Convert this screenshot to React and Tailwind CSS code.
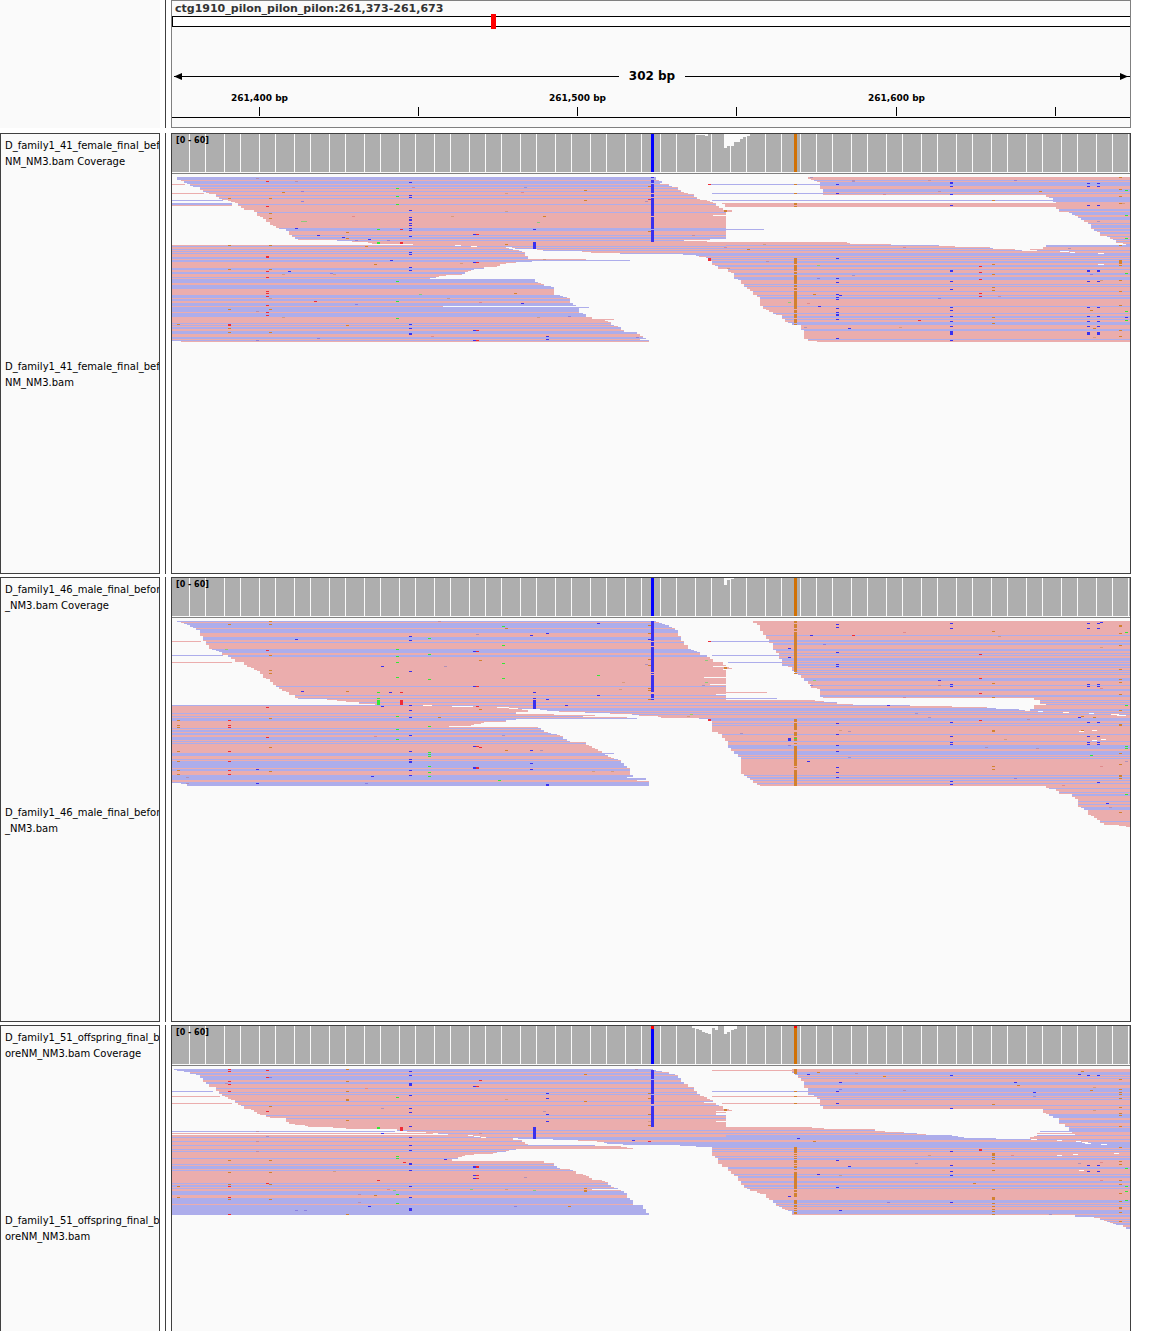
import React from "react";

const COLORS = {
  pink: "#ebadad",
  blue: "#adadeb",
  A: "#33e833",
  C: "#3a30ee",
  G: "#d2812f",
  T: "#ee2b36",
  gap: "#ffffff",
  lowC: "#8a80e0",
  lowT: "#e08a8c",
  lowG: "#d59a80",
  lowA: "#8cc878",
  lowX: "#b090b8",
};

const CHART_START = 172;
const CHART_WIDTH = 958;
const CHART_END = CHART_START + CHART_WIDTH;

// "0:177 3:181" -> [[0, 177], [3, 181]]
const parseSteps = (text) => text.split(" ").map((s) => s.split(":").map(Number));

// "0-2 5" -> [[0, 2], [5, 5]]
const parseRanges = (text) =>
  text.split(" ").map((s) => {
    const [a, b] = s.split("-").map(Number);
    return [a, b === undefined ? a : b];
  });

const valueAt = (steps, row) => {
  let value = steps[0][1];
  for (const [r, x] of steps) if (r <= row) value = x;
  return value;
};

function blockRects({ left, right, end, blue }) {
  const l = parseSteps(left);
  const r = parseSteps(right);
  const b = parseRanges(blue);
  const out = [];
  for (let row = l[0][0]; row < end; row++) {
    const x1 = valueAt(l, row);
    const x2 = valueAt(r, row);
    const color = b.some(([s, e]) => row >= s && row <= e) ? COLORS.blue : COLORS.pink;
    const last = out[out.length - 1];
    if (last && last.x1 === x1 && last.x2 === x2 && last.color === color) last.h += 1;
    else out.push({ x1, x2, y: row, h: 1, color });
  }
  return out;
}

const SNP_C = 651;
const SNP_G = 794;

const female = {
  height: 166,
  blocks: [
    {
      left: "0:177 3:181 4:184 6:187 7:190 9:193 10:200 13:203 15:206 16:209 17:216 20:219 22:222 23:228 24:231 25:235 26:238 29:241 31:244 33:254 35:257 39:260 40:263 42:266 45:270 48:273 49:276 51:279 52:286 54:289 58:292 60:295 62:298 63:337 64:352 65:368 66:372 67:413",
      right: "0:656 3:659 4:662 6:660 7:669 9:672 10:678 13:681 15:684 16:688 17:694 20:697 22:700 23:707 24:710 25:713 26:716 29:719 31:723 33:732 35:726 38:713 39:726 62:710 63:684 64:707 65:726",
      end: 68,
      blue: "0-2 4-6 8-9 11 14 18 21 27 35 51-53 58 60-61 63",
    },
    {
      left: "68:172 164:181",
      right: "68:726 70:506 71:509 72:513 73:519 74:522 75:525 79:528 82:586 83:630 84:532 85:516 86:506 87:500 89:497 90:484 92:474 93:471 94:468 95:465 97:462 98:446 99:439 100:436 101:430 102:535 105:538 106:541 107:544 109:551 110:554 118:560 119:563 120:567 121:570 126:573 128:576 129:443 130:589 131:579 136:583 137:586 140:592 142:614 143:605 144:608 145:611 148:614 149:618 150:621 153:624 155:637 157:640 159:643 161:646 162:640 163:649",
      end: 165,
      blue: "69 72 74 76 80-81 83-84 91-92 95-96 100 102-105 108-111 118-120 122-123 126-128 130-134 136-139 146 148 150-151 154-156 160-161 163",
    },
    {
      left: "65:726 70:512 71:515 72:537 73:543 74:582 75:591 76:620 77:683 78:696 79:699 80:706 81:708 84:712 88:715 89:718 92:728 95:731 96:734 102:738 103:741 107:744 110:747 112:750 114:753 118:757 120:760 129:763 132:766 133:769 135:773 137:776 138:782 142:785 145:788 146:792 148:801 153:804 162:808 164:817",
      right: "65:847 66:850 67:891 68:939 69:955 70:990 71:993 72:1015 73:1022 74:1130",
      end: 165,
      blue: "68 71 73 76-78 80 82 84-85 88-89 92 96-97 100-102 107 109 114 118 120-121 129 136 139-140 142 145-147 152-153 162",
    },
    {
      left: "0:808 2:811 3:814 4:817 5:820 12:823 18:1046 20:1049 21:1053 25:1056 26:722 27:725 30:1056 32:1059 35:1069 36:1072 38:1075 39:1078 41:1081 43:1084 45:1088 47:1091 52:1094 54:1097 55:1100 59:1107 60:1110 62:1113 63:1116 66:1123 67:1126 68:1046 70:1043 72:1030 73:1037",
      right: "0:1130",
      end: 74,
      blue: "3 5-8 12-14 16 20-24 32-33 35-37 40-42 46 48-50 52-53 55-56 59 62 64 67-69 73",
    },
  ],
  reads: [
    ["pink", 172, 185, 7, 1], ["pink", 172, 204, 16, 1], ["blue", 172, 223, 23, 1],
    ["blue", 172, 232, 26, 3], ["pink", 172, 232, 28, 1],
    ["blue", 711, 820, 7, 1], ["blue", 712, 823, 16, 1], ["blue", 712, 1053, 23, 1],
    ["blue", 726, 764, 52, 1],
    ["gap", 455, 461, 68, 1], ["gap", 471, 477, 69, 1],
    ["gap", 1060, 1069, 74, 1], ["gap", 1070, 1075, 75, 1], ["gap", 1098, 1104, 76, 1], ["gap", 1098, 1104, 87, 1],
  ],
  marks: [
    ["C", SNP_C, "0 3-5 7-15 17-19 21-38 40-51 53-64"],
    ["G", SNP_G, "7 16 26-27 29 81-86 88-93 95-96 98-106 108-109 111-112 114-131 133-135 137-140 142-144 145 147"],
    ["T", 266, "4 29 79-80 94 100 114 116 119 128 135 138"],
    ["T", 228, "147-148"], ["T", 400, "52 65-66"], ["T", 476, "57 85 153 163"], ["C", 473, "57 85 153 163"],
    ["T", 314, "124"], ["lowT", 479, "125"],
    ["C", 409, "5 18 20 33 40 42-43 46 48 51 53 59 75 77 90 93 147 151 156-157"],
    ["C", 295, "51"], ["C", 317, "58"], ["C", 342, "60"], ["C", 368, "62"], ["C", 390, "83"], ["C", 288, "94"],
    ["A", 396, "11 19 27 104 124 141"], ["A", 377, "52 65-66"], ["lowA", 301, "44"], ["lowA", 304, "44"],
    ["G", 228, "21 68 92 132 151 155"], ["G", 269, "21 36 41 68 92 132 155"], ["G", 346, "55 61 148"],
    ["G", 282, "15"], ["G", 365, "69"], ["G", 374, "87"], ["G", 177, "147"],
    ["lowX", 256, "1 134"], ["lowX", 295, "4"], ["lowC", 301, "14 24"], ["lowT", 412, "10"], ["lowT", 352, "39"],
    ["lowG", 451, "39"], ["lowC", 355, "63 127"], ["lowC", 387, "63"], ["lowG", 447, "121"], ["lowA", 419, "117"],
    ["lowG", 460, "86"], ["lowC", 330, "96"], ["lowG", 333, "97"], ["lowG", 282, "97 140"], ["lowT", 431, "159"],
    ["lowC", 317, "161"], ["lowC", 256, "163"], ["lowG", 269, "121"],
    ["G", 584, "13 23"], ["G", 648, "9 54"], ["T", 648, "22"], ["lowX", 645, "24"], ["G", 724, "33-34"],
    ["lowA", 537, "45"], ["G", 543, "39"], ["C", 533, "52 65-71"], ["C", 521, "126"], ["C", 546, "159 162"],
    ["T", 708, "7 81-83"], ["G", 747, "72"], ["lowX", 766, "84"], ["lowA", 788, "125"], ["lowT", 724, "70"],
    ["lowX", 524, "10"], ["lowT", 521, "15"], ["lowG", 505, "16 34"], ["G", 505, "67"], ["G", 514, "116"],
    ["lowG", 537, "140"], ["lowC", 568, "139"], ["lowC", 636, "160"], ["lowX", 692, "58"], ["lowG", 543, "82"], ["lowG", 727, "91"], ["lowG", 763, "67"],
    ["C", 836, "7 16 81 101 105 117 120 122 131 135 137-138 142 161"], ["C", 839, "118"], ["C", 818, "129"], ["C", 848, "151"],
    ["C", 950, "5-6 9 17 28 93-94 104 112 130 133 139 144 149 154-157 163"],
    ["C", 1087, "6 9 28 93-94 104 130 139 144 149 155-157"], ["C", 1097, "6 9 28 93-94 104 130 139 144 149 155-157"],
    ["G", 1119, "0 12 19 26 68 83-86 88 103 114 128 153 159"],
    ["A", 1125, "13 38 61 96 134 143"], ["C", 1125, "140"],
    ["G", 992, "23 87 97 110 113 140 146"], ["T", 979, "89 95 102 116 119"], ["T", 918, "143"],
    ["lowX", 810, "0"], ["lowX", 852, "3-4"], ["lowX", 928, "3"], ["lowC", 1014, "3"], ["lowX", 938, "14"], ["G", 1039, "14"],
    ["lowT", 883, "17"], ["lowX", 1097, "44"], ["lowT", 903, "70"], ["lowA", 817, "88"], ["lowX", 852, "98"], ["lowC", 817, "101"],
    ["G", 813, "117"], ["lowC", 938, "121"], ["lowT", 998, "119"], ["lowX", 1068, "71"], ["lowC", 1090, "97"],
    ["G", 1090, "133"], ["G", 1093, "151"], ["lowG", 1093, "160"], ["lowG", 899, "150"], ["lowG", 1100, "103"], ["lowG", 1122, "26"], ["lowX", 804, "150"], ["lowT", 807, "126"],
  ],
  dips: [[695, 10, 1], [705, 3, 2], [724, 3, 14], [727, 7, 12], [734, 6, 8], [740, 3, 5], [743, 4, 3], [747, 3, 2]],
  capC: 0,
  capG: 0,
};

const male = {
  height: 207,
  blocks: [
    {
      left: "0:177 1:181 2:184 3:187 4:190 6:193 7:196 9:200 15:203 20:206 24:209 28:212 29:216 30:219 31:222 34:228 36:231 38:235 41:244 44:247 46:251 47:254 49:257 50:260 53:263 57:266 58:270 61:273 64:276 66:279 68:282 70:286 71:289 74:295 77:298 78:327 79:337 80:346 81:359 83:375",
      right: "0:656 1:659 2:662 3:665 4:669 6:672 7:675 9:678 15:681 20:684 24:688 28:691 29:694 30:697 31:700 34:707 36:710 38:713 41:723 44:726 45:713 46:729 47:732 48:723 49:726 56:704 57:726 63:710 64:726 73:716 74:726",
      end: 84,
      blue: "0 2-6 8-11 16-18 21 28-31 34-35 65 74 77 81",
    },
    {
      left: "84:172 162:181 163:187",
      right: "84:726 86:497 87:509 88:522 89:528 91:516 93:554 94:595 95:583 96:627 97:637 98:516 99:506 101:484 102:481 103:474 104:471 105:449 106:538 107:541 109:544 111:548 112:551 113:557 114:560 115:563 118:567 120:570 121:586 124:589 125:592 127:595 128:598 130:602 132:614 133:605 134:608 136:611 137:614 138:618 139:621 142:624 145:627 147:630 154:633 156:627 157:646 159:637 160:649",
      end: 165,
      blue: "84 92 95 97-99 107 109-110 112-113 116-118 120 122 132-134 138 140-146 148-149 154-158 161-164",
    },
    {
      left: "79:726 84:726 86:509 87:518 88:540 89:547 90:559 91:585 92:610 93:632 94:639 95:658 96:661 97:699 98:708 100:712 111:718 113:722 117:725 120:728 127:731 130:734 133:738 136:741 153:744 155:747 157:750 159:753 162:757 164:760 165:1046 167:1049 168:1056 170:1059 173:1072 176:1075 178:1078 186:1081 187:1084 189:1088 194:1091 195:1094 197:1097 199:1100 202:1104 204:1119 205:1126",
      right: "79:815 80:824 81:837 83:853 84:910 85:952 86:987 87:996 88:1019 89:1025 90:1130",
      end: 206,
      blue: "81 84 87-89 91 93 97-99 102 104 113 120 124-127 130-133 135 137 154 156-157 159 162 167 171 173-174 180 183 186-188 200",
    },
    {
      left: "0:753 2:757 4:760 10:763 14:766 18:769 22:773 29:776 32:779 38:782 45:788 46:792 50:795 53:798 54:801 57:804 60:808 63:811 67:817 68:820 76:823 77:1034 79:1040 83:1046 84:1034 88:1030",
      right: "0:1130",
      end: 90,
      blue: "14 19-20 22-23 28-29 32 34 37-39 41 43-44 46 49 51 53 57-59 64 68-69 74-75 79 81 83 88-89",
    },
  ],
  reads: [
    ["pink", 172, 201, 20, 1], ["blue", 172, 223, 34, 1], ["pink", 172, 232, 41, 1],
    ["blue", 711, 769, 20, 1], ["blue", 712, 779, 34, 1], ["blue", 728, 782, 41, 1],
    ["pink", 726, 767, 71, 1], ["blue", 726, 777, 77, 1],
    ["gap", 423, 432, 84, 1], ["gap", 452, 473, 85, 1],
    ["gap", 1038, 1043, 90, 1], ["gap", 1063, 1069, 91, 1], ["gap", 1089, 1094, 92, 1], ["gap", 1111, 1119, 93, 1],
    ["gap", 1117, 1126, 94, 1], ["gap", 1092, 1097, 109, 1], ["gap", 1079, 1084, 110, 1], ["gap", 1101, 1106, 118, 1], ["gap", 1092, 1097, 119, 1],
  ],
  marks: [
    ["C", SNP_C, "0-19 21-24 26-50 52 54-70 73-76 78"],
    ["G", SNP_G, "0-1 3-6 8-9 11-50 52 98-100 102-108 111-114 116-119 122 125-144 146 149-164"],
    ["C", 409, "15 19 50 84 89 96 114 130 138 140-141 149 154"], ["C", 295, "18"], ["C", 381, "45"], ["C", 389, "71"],
    ["A", 428, "17 33 58 105 131 133 135 145 151 155"], ["A", 396, "28 35 41 56 95 108 118"],
    ["T", 266, "29 86 116"], ["C", 473, "30 65 125 146-147"], ["T", 476, "30 65 85 125 146-147"],
    ["G", 479, "39 88"], ["lowX", 476, "13"], ["lowX", 438, "0"], ["lowX", 444, "45"],
    ["G", 269, "0 3 34 49 52 97 126 150"], ["G", 228, "3"], ["T", 228, "99 104 106 130 140 149 153"],
    ["G", 177, "99 104 106 130 140 149 153"], ["lowX", 186, "156 162"], ["C", 256, "148 162"],
    ["C", 301, "70"], ["G", 346, "70"], ["A", 377, "71 77 79-83"], ["T", 400, "71 79-83"], ["C", 381, "85"],
    ["C", 371, "155"], ["lowC", 365, "162"], ["lowT", 374, "115"], ["G", 438, "96"], ["T", 479, "126"], ["lowA", 225, "28"],
    ["A", 502, "5 24 42 57"], ["G", 505, "7 129"], ["C", 533, "71 77 79-87"], ["C", 530, "14 129 142 148"],
    ["C", 546, "12 78 163-164"], ["C", 597, "2 74"], ["A", 597, "54"], ["C", 565, "84"], ["G", 648, "4 12 38 44 67 69 78"], ["C", 648, "18"],
    ["lowX", 645, "43"], ["G", 724, "46-47"], ["T", 708, "20 98-99"], ["lowG", 622, "61"], ["lowG", 619, "68"],
    ["lowA", 705, "39 61"], ["lowX", 702, "64"], ["lowG", 592, "150"], ["lowG", 611, "150"], ["lowX", 540, "129"], ["lowX", 502, "114"], ["A", 498, "159"],
    ["C", 788, "27 36 117-119"], ["A", SNP_G, "117"], ["lowC", 788, "124"], ["lowX", 740, "112"], ["lowA", 690, "93"], ["lowG", 687, "95"],
    ["C", 836, "3 6 31 43 45 102 113 124 130 146 151 156"], ["C", 950, "2 7 63 65 101 115 121 123 160 163"],
    ["C", 1087, "2 7 63 65 101 115 121 123"], ["C", 1097, "2 7 63 65 101 115 121 123 161"], ["C", 1100, "1"],
    ["G", 1119, "4-5 12 24 48 58 61 73 89 103-104 132 143 154-155 157 191"],
    ["A", 1125, "11 84 125 127 173"], ["lowX", 1125, "140"], ["A", 1090, "134"],
    ["G", 992, "10 62 76 109-110 145 148"], ["T", 979, "33 57 72 99"], ["lowG", 998, "15"], ["lowT", 903, "11 76"],
    ["C", 810, "14"], ["T", 852, "14"], ["lowC", 823, "23"], ["lowA", 813, "59"], ["C", 938, "59"], ["lowX", 938, "64"], ["C", 887, "84"],
    ["lowX", 928, "96"], ["lowX", 915, "92"], ["lowX", 1027, "98"], ["C", 1078, "96"], ["G", 1081, "95 109"], ["G", 1093, "96"],
    ["lowT", 1100, "67 145"], ["lowG", 1100, "26"], ["lowX", 848, "110 136"], ["lowG", 839, "109"], ["C", 807, "140"], ["lowC", 810, "64"],
    ["lowX", 985, "126"], ["lowX", 1036, "127"], ["lowG", 1004, "118"], ["lowC", 1014, "157"], ["C", 1106, "182"], ["lowX", 1109, "186"], ["lowT", 1062, "164"],
  ],
  dips: [[724, 3, 7], [727, 3, 2], [731, 3, 1]],
  capC: 0,
  capG: 0,
};

const offspring = {
  height: 161,
  blocks: [
    {
      left: "0:174 1:177 2:184 3:190 5:196 6:200 9:203 13:206 15:209 18:216 22:219 25:222 27:225 28:228 30:231 31:235 34:238 36:241 37:244 40:251 41:254 43:257 45:260 46:266 48:270 49:286 53:289 55:295 56:305 57:308 58:333 59:346 60:397 62:407 63:426 64:438 65:448",
      right: "0:653 1:656 2:662 3:669 5:675 6:678 9:681 13:684 15:688 18:694 22:697 25:700 27:704 28:707 30:710 31:713 33:704 34:716 36:719 37:723 40:729 41:732 42:716 43:726 44:716 46:726 52:716 53:726",
      end: 66,
      blue: "0-2 4-5 7-10 13-14 19 23 25 32 36 46 49 61 64",
    },
    {
      left: "66:172",
      right: "66:726 69:513 71:522 73:525 75:528 76:595 77:621 78:627 79:633 80:516 81:509 82:506 83:497 84:493 85:474 86:465 87:462 88:458 90:452 92:544 94:554 97:557 99:560 100:570 101:573 102:576 105:583 106:586 107:589 109:592 111:602 112:605 113:608 116:611 118:614 119:618 120:592 121:621 122:624 124:627 129:630 131:633 136:643 140:646 144:649",
      end: 146,
      blue: "68 72 76 80 82 89 95 97-99 101 114 116-117 119 122-125 129-134 136-145",
    },
    {
      left: "58:726 69:518 70:553 71:578 72:597 73:604 74:607 75:623 76:680 77:696 78:712 87:715 89:718 95:722 98:728 102:731 105:734 107:738 112:741 116:744 119:747 120:750 122:757 124:760 125:766 129:769 131:773 134:776 137:779 138:782 140:785 141:788 142:792 146:1075 148:1094 149:1100 151:1104 152:1107 153:1110 154:1113 155:1116 156:1123 158:1126",
      right: "58:812 59:824 60:875 62:885 63:904 64:917 65:926 66:952 67:958 68:964 69:996 70:1130",
      end: 160,
      blue: "61 64 66-70 73-78 80 82 87 89-90 98-99 105 107-108 112-113 116-117 119 131-133 135 137 141-144 146-147 150 152 154-155 158-159",
    },
    {
      left: "0:792 4:795 6:798 9:801 12:804 19:808 26:814 28:817 30:820 37:823 40:1043 44:1046 45:1049 47:1053 49:1059 55:1065 58:1069 62:1040 63:1072 64:1037 65:1075 66:1037 67:1034 68:1030",
      right: "0:1130",
      end: 70,
      blue: "3-5 7 9 13-15 19-22 24-26 28 30 36 40 45-48 51-53 57 59-62 66",
    },
  ],
  reads: [
    ["blue", 172, 213, 22, 1], ["pink", 172, 220, 27, 1], ["pink", 172, 232, 34, 1],
    ["blue", 172, 395, 62, 1], ["pink", 172, 433, 64, 1],
    ["pink", 712, 792, 1, 1], ["blue", 712, 808, 22, 1], ["pink", 712, 814, 27, 1], ["pink", 722, 820, 34, 1],
    ["gap", 468, 473, 66, 1], ["gap", 474, 480, 67, 1], ["gap", 481, 486, 68, 1],
    ["gap", 1031, 1037, 70, 1], ["gap", 1057, 1062, 71, 1], ["gap", 1076, 1081, 72, 1], ["gap", 1082, 1088, 73, 1],
    ["gap", 1085, 1091, 74, 1], ["gap", 1101, 1107, 75, 1], ["gap", 1073, 1078, 85, 1], ["gap", 1057, 1062, 86, 1], ["gap", 1114, 1119, 84, 1], ["gap", 1079, 1084, 101, 1],
  ],
  marks: [
    ["C", SNP_C, "1-9 11-24 26-34 37-57"],
    ["G", SNP_G, "0-4 22 27 34 78-83 85 87 89 91-93 95 97-98 100 103-109 110-116 117-119 121-122 124-127 131-133 134 136-137 139 141 143-144"],
    ["T", 228, "0 2 12 15 22 117 128 145"], ["G", 228, "91 103 115 130"], ["T", 266, "1 8 42 114"], ["lowC", 269, "8"],
    ["G", 269, "37 91 103 115 130"], ["G", 346, "0 12 22 30-31 51 145"],
    ["C", 409, "2 6 14-16 26 39 43 57 68 76 81 94-95 101 117 128 139-141"],
    ["C", 473, "17 97-98 106 109"], ["T", 476, "17 97-98 106 109"], ["T", 479, "11"], ["A", 396, "28 87 89 125 134"],
    ["A", 377, "58-59"], ["T", 400, "58-61"], ["lowX", 256, "62 72 82"], ["C", 381, "64"], ["lowX", 479, "64"], ["lowX", 381, "39"],
    ["lowT", 365, "19"], ["lowX", 266, "67"], ["C", 444, "90"], ["T", 403, "93"], ["G", 177, "117 128"], ["G", 374, "126"],
    ["T", 377, "111"], ["lowG", 333, "102"], ["lowA", 393, "121"], ["lowA", 470, "120"], ["lowT", 387, "120"], ["lowX", 358, "125 133"],
    ["C", 368, "137"], ["lowC", 295, "141"], ["lowC", 304, "141"], ["lowX", 225, "14"],
    ["C", 546, "24 29 45 52"], ["G", 584, "5 32 119 121-122"], ["C", 533, "58-69"], ["G", 648, "24 29 45 56"], ["lowG", 648, "52"],
    ["G", 724, "40-41"], ["lowG", 505, "30 120"], ["lowX", 543, "42"], ["lowX", 524, "108"], ["lowA", 533, "121"], ["G", 568, "137"], ["lowC", 514, "137"], ["lowX", 635, "0"],
    ["C", 632, "71"], ["T", 648, "72"], ["C", 797, "69"], ["C", 788, "127"],
    ["C", 836, "22 34 91 118"], ["C", 839, "13 141"], ["lowC", 839, "20"], ["C", 950, "6 39 82 96 102 106 133"],
    ["C", 1087, "6 96 102"], ["C", 1097, "6 96 102"], ["G", 992, "35 84-86 88 90 94 101 120 128-130 134 137 140 142 145"],
    ["T", 979, "80-81"], ["G", 1119, "10 20 23 25 29 38 44 46 57 78 92 95 111 115 124 132 138-139 143 152"],
    ["A", 1125, "99 117 122 131"], ["C", 1033, "23"], ["lowX", 1033, "27"], ["C", 1014, "13"], ["G", 1017, "16"], ["G", 1081, "2"], ["C", 1078, "5"],
    ["lowG", 1093, "18 41"], ["G", 1090, "21"], ["G", 883, "7"], ["G", 817, "3"], ["C", 807, "5"], ["lowX", 855, "4"], ["lowX", 903, "21"],
    ["G", 813, "72"], ["lowG", 928, "86"], ["lowT", 1011, "86"], ["lowX", 915, "94"], ["C", 848, "97"], ["C", 817, "105"], ["lowG", 839, "106"],
    ["G", 973, "114"], ["lowC", 887, "133"], ["lowT", 1100, "93 111"], ["lowX", 1078, "94"], ["lowX", 1049, "145"],
  ],
  dips: [[692, 4, 2], [696, 3, 3], [699, 3, 4], [702, 3, 6], [705, 3, 7], [708, 3, 8], [712, 3, 2], [715, 3, 4], [724, 3, 8], [727, 3, 6], [730, 4, 4], [734, 3, 3]],
  capC: 3,
  capG: 2,
};

const TRACKS = [
  { id: "female", data: female, lines: ["D_family1_41_female_final_befo", "NM_NM3.bam"], size: "h-[441px]" },
  { id: "male", data: male, lines: ["D_family1_46_male_final_before", "_NM3.bam"], size: "h-[445px]" },
  { id: "offspring", data: offspring, lines: ["D_family1_51_offspring_final_be", "oreNM_NM3.bam"], size: "h-[366px]" },
];

const SEPARATORS = [
  189, 205, 224, 240, 259, 275, 294, 310, 329, 345, 364, 380, 399, 415, 434, 450, 469, 485, 501, 520, 536, 555, 571,
  590, 606, 625, 641, 660, 676, 695, 711, 730, 746, 765, 781, 800, 816, 832, 851, 867, 886, 902, 921, 937, 956, 972,
  991, 1007, 1026, 1042, 1061, 1077, 1096, 1112, 1128,
];

function Coverage({ data }) {
  return (
    <div className="relative h-[40px] shrink-0 border-b border-[#808080]">
      <svg
        className="block h-[38px] w-full"
        viewBox={`${CHART_START} 0 ${CHART_WIDTH} 38`}
        preserveAspectRatio="none"
        shapeRendering="crispEdges"
        aria-hidden="true"
      >
        <rect x={CHART_START} y={0} width={CHART_WIDTH} height={38} fill="#aeaeae" />
        {data.dips.map(([x, w, h]) => (
          <rect key={x} x={x} y={0} width={w} height={h} fill="#fafafa" />
        ))}
        {SEPARATORS.map((x) => (
          <rect key={x} x={x} y={0} width={1} height={38} fill="#fafafa" />
        ))}
        <rect x={SNP_C} y={0} width={3} height={38} fill="#0000ff" />
        <rect x={SNP_G} y={0} width={3} height={38} fill="#d17105" />
        <rect x={SNP_C} y={0} width={3} height={data.capC} fill="#ff0000" />
        <rect x={SNP_G} y={0} width={3} height={data.capG} fill="#ff0000" />
      </svg>
      <span className="absolute top-0 left-1 text-[8px] leading-[14px] font-bold text-black">[0 - 60]</span>
    </div>
  );
}

function Pileup({ data }) {
  return (
    <svg
      className="mt-[3px] block w-full shrink-0"
      height={data.height}
      viewBox={`${CHART_START} 0 ${CHART_WIDTH} ${data.height}`}
      preserveAspectRatio="none"
      shapeRendering="crispEdges"
      aria-hidden="true"
    >
      {data.blocks.map((block, b) =>
        blockRects(block).map((r) => (
          <rect key={`${b}-${r.y}`} x={r.x1} y={r.y} width={Math.min(r.x2, CHART_END) - r.x1} height={r.h} fill={r.color} />
        ))
      )}
      {data.reads.map(([color, x1, x2, y, h], i) => (
        <rect key={i} x={x1} y={y} width={x2 - x1} height={h} fill={COLORS[color]} />
      ))}
      {data.marks.map(([color, x, rows], i) =>
        parseRanges(rows).map(([a, b]) => (
          <rect key={`${i}-${a}`} x={x} y={a} width={3} height={b - a + 1} fill={COLORS[color]} />
        ))
      )}
    </svg>
  );
}

function Row({ name, children, className }) {
  return (
    <div className={`flex shrink-0 ${className}`}>
      {name}
      <div className="ml-[5px] w-px shrink-0 bg-[#404040]" />
      <div className="ml-[5px] flex min-w-0 flex-1">{children}</div>
    </div>
  );
}

function Track({ track }) {
  const [first, second] = track.lines;
  return (
    <Row
      className={track.size}
      name={
        <div className="flex w-[160px] shrink-0 flex-col overflow-hidden border border-[#404040] bg-[#fafafa] pl-1 text-[10px] leading-4 whitespace-nowrap text-black">
          <div className="h-[42px] shrink-0 pt-1">
            <p>{first}</p>
            <p>{second} Coverage</p>
          </div>
          <div className="flex flex-1 flex-col justify-center">
            <p>{first}</p>
            <p>{second}</p>
          </div>
        </div>
      }
    >
      <div className="flex min-w-0 flex-1 flex-col border border-[#404040] bg-[#fafafa]">
        <Coverage data={track.data} />
        <Pileup data={track.data} />
      </div>
    </Row>
  );
}

const TICKS = [
  { x: 259, label: "261,400 bp" },
  { x: 418 },
  { x: 577, label: "261,500 bp" },
  { x: 736 },
  { x: 896, label: "261,600 bp" },
  { x: 1055 },
];

const toPercent = (x) => `${((x - CHART_START) / CHART_WIDTH) * 100}%`;

function Ruler() {
  return (
    <div className="flex min-w-0 flex-1 flex-col border border-[#808080] bg-[#fafafa]">
      <h1 className="h-[15px] pl-[3px] text-[11px] leading-4 font-bold whitespace-nowrap text-[#333333]">
        ctg1910_pilon_pilon_pilon:261,373-261,673
      </h1>
      <div className="relative h-[11px] border-y border-l border-black bg-white">
        <div className="absolute -top-[3px] h-[15px] w-[5px] bg-[#ff0000]" style={{ left: toPercent(490) }} />
      </div>
      <div className="mt-[39px] flex h-5 items-center text-[12px] text-black">
        <svg className="-mr-2 ml-[2px] h-[7px] w-2 shrink-0" viewBox="0 0 8 7">
          <path d="M0 3.5 8 0V7Z" fill="currentColor" />
        </svg>
        <div className="h-px flex-1 bg-black" />
        <span className="w-[66px] text-center leading-5 font-bold">302 bp</span>
        <div className="h-px flex-1 bg-black" />
        <svg className="mr-[2px] -ml-[10px] h-[7px] w-2 shrink-0" viewBox="0 0 8 7">
          <path d="M8 3.5 0 0V7Z" fill="currentColor" />
        </svg>
      </div>
      <div className="relative mt-[5px] h-[27px] border-b border-black">
        {TICKS.map(({ x, label }) => (
          <div key={x} className="absolute inset-y-0 flex w-px flex-col items-center" style={{ left: toPercent(x) }}>
            <span className="h-4 text-[9px] leading-[14px] font-bold whitespace-nowrap text-black">{label}</span>
            <span className="h-[9px] w-px bg-black" />
          </div>
        ))}
      </div>
    </div>
  );
}

export default function App() {
  return (
    <main className="flex h-screen flex-col gap-[3px] overflow-hidden bg-white pr-[19px] font-['DejaVu_Sans',sans-serif]">
      <Row className="mb-[2px] h-32" name={<div className="w-[160px] shrink-0 bg-[#fafafa]" />}>
        <Ruler />
      </Row>
      {TRACKS.map((track) => (
        <Track key={track.id} track={track} />
      ))}
    </main>
  );
}
